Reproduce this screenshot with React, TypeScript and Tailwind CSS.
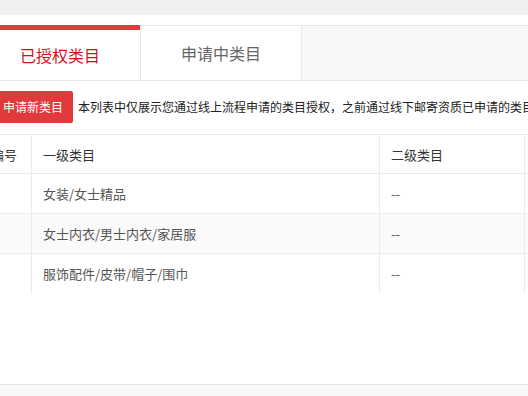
import React from "react";

const rows = [
  { id: "1", first: "女装/女士精品", second: "--" },
  { id: "2", first: "女士内衣/男士内衣/家居服", second: "--" },
  { id: "3", first: "服饰配件/皮带/帽子/围巾", second: "--" },
];

const cell = "border-r border-[#ebebeb] pl-[11px] flex items-center";

const App = () => {
  return (
    <div
      className="w-[528px] h-[396px] overflow-hidden bg-white flex flex-col"
      style={{ fontFamily: '"Noto Sans CJK SC", "Noto Sans", sans-serif' }}
    >
      <div className="h-[15px] bg-[#f0f0f0] shrink-0" />
      <div className="ml-[-20px] w-[560px] mt-[10px] flex flex-col">
        {/* tabs */}
        <div className="flex h-[56px] border-t border-b border-[#e8e8e8] bg-[#f8f8f8]">
          <div className="w-[160px] flex flex-col bg-white -mt-px">
            <div className="h-[5px] bg-[#e03a3a]" />
            <div className="flex-1 flex items-center justify-center text-[16px] text-[#d0121b]">
              已授权类目
            </div>
          </div>
          <div className="w-[162px] flex items-center justify-center bg-white border-l border-r border-[#e8e8e8] text-[16px] text-[#666]">
            申请中类目
          </div>
        </div>

        {/* toolbar */}
        <div className="flex items-center mt-[10px] pl-[13px] whitespace-nowrap">
          <button className="h-[32px] px-[10px] bg-[#e03a3c] text-white text-[12px] rounded-[2px] shrink-0">
            申请新类目
          </button>
          <span className="ml-[5px] text-[12px] text-[#222]">
            本列表中仅展示您通过线上流程申请的类目授权，之前通过线下邮寄资质已申请的类目授权请咨询客服
          </span>
        </div>

        {/* table */}
        <div className="mt-[11px] border-t border-[#ebebeb] text-[13px]">
          <div className="grid grid-cols-[52px_348px_145px_1fr] h-[39px] border-b border-[#ebebeb] text-[#333]">
            <div className={cell}>编号</div>
            <div className={cell}>一级类目</div>
            <div className={cell}>二级类目</div>
            <div className={cell}>操作</div>
          </div>
          {rows.map((r, i) => (
            <div
              key={r.id}
              className={
                "grid grid-cols-[52px_348px_145px_1fr] h-[40px] text-[#555] " +
                (i % 2 === 1 ? "bg-[#fafafa] " : "bg-white ") +
                (i < rows.length - 1 ? "border-b border-[#ebebeb]" : "")
              }
            >
              <div className={cell}>{r.id}</div>
              <div className={cell}>{r.first}</div>
              <div className={cell}>{r.second}</div>
              <div className={cell}></div>
            </div>
          ))}
        </div>
      </div>
      <div className="mt-auto h-[12px] border-t border-[#e6e6e6] bg-[#f8f8f8] shrink-0" />
    </div>
  );
};

export default App;
